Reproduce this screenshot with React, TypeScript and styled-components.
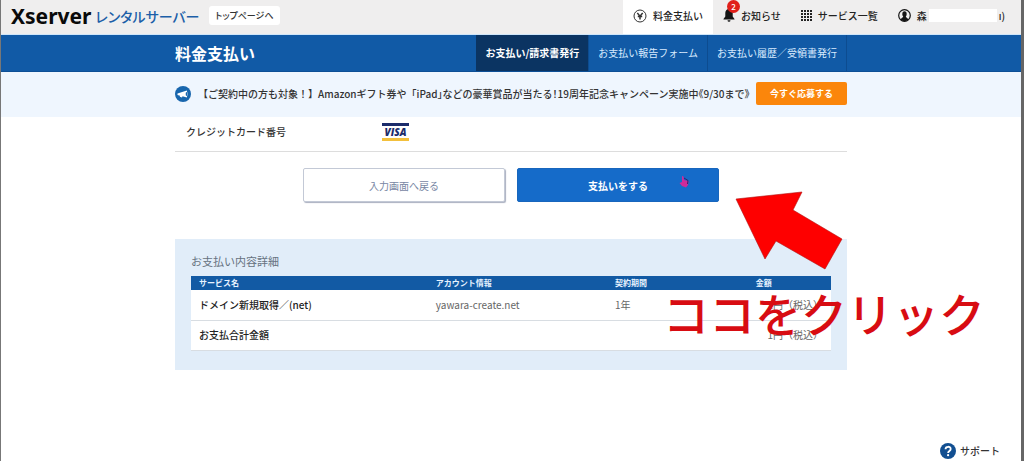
import React from "react";
import styled, { createGlobalStyle, css } from "styled-components";

const GlobalStyle = createGlobalStyle`
  *, *::before, *::after { box-sizing: border-box; }
  body {
    margin: 0;
    background: #fff;
    color: #333;
    font-family: "Noto Sans CJK JP", "Noto Sans", sans-serif;
    font-size: 10px;
    line-height: 16px;
  }
  a { color: inherit; text-decoration: none; }
  button { font-family: inherit; cursor: pointer; }
  svg { flex-shrink: 0; }
`;

const Page = styled.div`
  min-height: 100vh;
  display: flex;
  flex-direction: column;
  border-left: 1px solid #777;
  border-right: 3px solid #666;
`;

const Header = styled.header`
  display: flex;
  align-items: stretch;
  height: 35px;
  padding: 0 16px 0 10px;
  background: #efeeee;
  border-bottom: 1px solid #cfe6fa;
`;

const Brand = styled.a`
  display: flex;
  align-items: center;
  gap: 4px;
  height: 32px;
`;

const BrandName = styled.span`
  font-family: "Noto Sans", sans-serif;
  font-size: 21px;
  font-weight: 700;
  color: #0a0a0a;
`;

const BrandProduct = styled.span`
  font-size: 14px;
  font-weight: 500;
  font-feature-settings: "palt";
  color: #1c5fa8;
`;

const TopLink = styled.a`
  align-self: flex-start;
  margin: 6px 0 0 10px;
  padding: 0 6px;
  border-radius: 3px;
  background: #fff;
  font-size: 9px;
  font-weight: 500;
  line-height: 19px;
  font-feature-settings: "palt";
`;

const Tools = styled.nav`
  display: flex;
  margin-left: auto;
`;

const Tool = styled.a<{ $active?: boolean }>`
  display: flex;
  align-items: center;
  gap: 6px;
  height: 34px;
  padding: 0 10px 3px;
  font-weight: 500;
  color: #222;
  white-space: nowrap;
  background: ${(p) => (p.$active ? "#fff" : "transparent")};
  &:last-child { padding-right: 0; }
`;

const IconBox = styled.span`
  position: relative;
  display: flex;
`;

const Badge = styled.span`
  position: absolute;
  top: -9px;
  left: 4px;
  width: 13px;
  height: 13px;
  border-radius: 50%;
  background: #e01f1a;
  color: #fff;
  font-size: 8px;
  line-height: 13px;
  text-align: center;
`;

const HiddenName = styled.span`
  width: 68px;
  height: 13px;
  margin: 0 -4px;
  background: #fff;
`;

const TitleBar = styled.div`
  background: #115aa6;
  border-bottom: 1px solid #0d4f96;
`;

const Inner = styled.div`
  display: flex;
  align-items: center;
  width: 100%;
  max-width: 672px;
  margin: 0 auto;
`;

const PageTitle = styled.h1`
  margin: 0 auto 0 0;
  font-size: 16px;
  line-height: 20px;
  font-weight: 700;
  color: #fff;
`;

const SubNav = styled.nav`
  display: flex;
`;

const SubLink = styled.a<{ $active?: boolean }>`
  padding: 0 9px;
  line-height: 36px;
  color: #d9ebff;
  white-space: nowrap;
  border-right: 1px solid #0d4c90;
  ${(p) =>
    p.$active &&
    css`
      background: #0b3462;
      color: #fff;
      font-weight: 700;
    `}
`;

const Campaign = styled.aside`
  padding: 10px 0 12px;
  background: #eff6fe;
`;

const CampaignText = styled.p`
  flex: 1;
  min-width: 0;
  margin: 0 0 0 7px;
  font-size: 10px;
  font-weight: 500;
  white-space: nowrap;
`;

const TightText = styled.span`
  font-feature-settings: "halt";
`;

const ApplyButton = styled.button`
  flex-shrink: 0;
  width: 91px;
  height: 23px;
  padding: 0;
  border: 0;
  border-radius: 2px;
  background: #fb860b;
  color: #fff;
  font-size: 9px;
  font-weight: 700;
`;

const Main = styled.main`
  position: relative;
  width: 100%;
  max-width: 672px;
  margin: 0 auto;
`;

const CardRow = styled.dl`
  display: flex;
  align-items: center;
  height: 35px;
  margin: 0;
  padding: 0 11px 4px;
  border-bottom: 1px solid #ddd;
`;

const CardTerm = styled.dt`
  width: 196px;
  font-weight: 500;
`;

const CardBrand = styled.dd`
  display: flex;
  margin: 0;
`;

const VisaMark = styled.span`
  width: 27px;
  height: 18px;
  border-top: 3px solid #1b2c6b;
  border-bottom: 3px solid #f3c03c;
  color: #1b2c6b;
  font-family: "Open Sans", sans-serif;
  font-size: 10px;
  font-style: italic;
  font-weight: 800;
  line-height: 12px;
  text-align: center;
`;

const Actions = styled.div`
  display: flex;
  justify-content: center;
  gap: 12px;
  padding: 16px 0 37px;
`;

const ActionButton = styled.button<{ $primary?: boolean }>`
  width: 202px;
  height: 34px;
  padding: 0;
  border: 1px solid #c3c9d6;
  border-radius: 2px;
  background: #fff;
  box-shadow: 1px 1px 1px #aab0c0;
  color: #7886a3;
  font-size: 10px;
  ${(p) =>
    p.$primary &&
    css`
      border-color: #1866bd;
      background: #156bc9;
      box-shadow: none;
      color: #fff;
      font-weight: 700;
    `}
`;

const Details = styled.section`
  padding: 14px 16px 19px;
  background: #e1edf9;
`;

const DetailsTitle = styled.h2`
  margin: 0 0 7px;
  font-size: 11px;
  font-weight: 400;
  line-height: 16px;
  color: #66727f;
`;

const DetailTable = styled.table`
  width: 100%;
  table-layout: fixed;
  border-collapse: collapse;
  background: #fff;
`;

const HeadCell = styled.th<{ $width: string; $center?: boolean }>`
  width: ${(p) => p.$width};
  padding: 0 8px;
  background: #125aa4;
  color: #e6f2ff;
  font-size: 8px;
  line-height: 14px;
  font-weight: 700;
  text-align: ${(p) => (p.$center ? "center" : "left")};
`;

const Row = styled.tr`
  border-bottom: 1px solid #d8dde2;
`;

const Cell = styled.td<{ $strong?: boolean; $right?: boolean }>`
  height: 30px;
  padding: 0 8px;
  color: ${(p) => (p.$strong ? "#222" : "#666")};
  font-weight: ${(p) => (p.$strong ? 500 : 400)};
  text-align: ${(p) => (p.$right ? "right" : "left")};
`;

const PointerIcon = styled.svg`
  position: absolute;
  top: 59px;
  left: 504px;
`;

const Arrow = styled.svg`
  position: absolute;
  top: 74px;
  left: 560px;
`;

const Callout = styled.strong`
  position: absolute;
  top: 167px;
  left: 488px;
  font-size: 46px;
  line-height: 56px;
  font-weight: 500;
  color: #d80c12;
  white-space: nowrap;
`;

const Support = styled.a`
  display: flex;
  align-items: center;
  gap: 4px;
  margin: auto 21px 2px auto;
  font-weight: 500;
`;

const YenIcon = () => (
  <svg width="14" height="14" viewBox="0 0 14 14" fill="none" stroke="#333">
    <circle cx="7" cy="7" r="6" />
    <path d="M4.3 4 7 7.200l2.700-3.200M7 7v3.500M4.800 7.400h4.400" strokeWidth="1.500" />
  </svg>
);

const BellIcon = () => (
  <svg width="12" height="13" viewBox="0 0 12 13" fill="#151515">
    <path d="M6 0C3.5 0 2.3 1.8 2.3 4v3.5L.5 10v.5h11V10L9.700 7.500V4C9.700 1.800 8.500 0 6 0ZM4.500 11.200h3a1.500 1.500 0 0 1-3 0Z" />
  </svg>
);

const GridIcon = () => (
  <svg width="11" height="11" viewBox="0 0 11 11" fill="#222">
    {[0, 3, 6, 9].map((y) =>
      [0, 3, 6, 9].map((x) => <rect key={`${x}-${y}`} x={x} y={y} width="2" height="2" />)
    )}
  </svg>
);

const UserIcon = () => (
  <svg width="13" height="13" viewBox="0 0 13 13">
    <circle cx="6.500" cy="6.500" r="5.800" fill="none" stroke="#151515" strokeWidth="1.200" />
    <ellipse cx="6.500" cy="5" rx="2.200" ry="2.700" fill="#151515" />
    <path d="M2.500 10.500C3.500 8.500 5.200 9 5.300 7h2.400c.1 2 1.800 1.500 2.800 3.500-2 2.300-6 2.300-8 0Z" fill="#151515" />
  </svg>
);

const MegaphoneIcon = () => (
  <svg width="16" height="16" viewBox="0 0 16 16">
    <circle cx="8" cy="8" r="8" fill="#1866ad" />
    <path d="M2.500 7.500 11.800 4.500Q13.500 8 11.800 11.500L7.500 10.300 7 11.500 4.800 10.800 5 9.700 2.500 9Z" fill="#fff" />
    <ellipse cx="11.500" cy="8" rx="0.800" ry="2" fill="#1866ad" />
  </svg>
);

const HelpIcon = () => (
  <svg width="16" height="16" viewBox="0 0 16 16">
    <circle cx="8" cy="8" r="8" fill="#124f91" />
    <path d="M5.500 6.200C5.500 3 10.700 3 10.700 6c0 2-2.600 1.900-2.600 4" fill="none" stroke="#fff" strokeWidth="1.800" />
    <circle cx="8.100" cy="12.200" r="1.100" fill="#fff" />
  </svg>
);

const columns = [
  { label: "サービス名", width: "37%" },
  { label: "アカウント情報", width: "28%" },
  { label: "契約期間", width: "14%" },
  { label: "金額", width: "21%", center: true },
];

export default function App() {
  return (
    <>
      <GlobalStyle />
      <Page>
        <Header>
          <Brand href="#">
            <BrandName>Xserver</BrandName>
            <BrandProduct>レンタルサーバー</BrandProduct>
          </Brand>
          <TopLink href="#">トップページへ</TopLink>
          <Tools>
            <Tool href="#" $active>
              <YenIcon />
              料金支払い
            </Tool>
            <Tool href="#">
              <IconBox>
                <BellIcon />
                <Badge>2</Badge>
              </IconBox>
              お知らせ
            </Tool>
            <Tool href="#">
              <GridIcon />
              サービス一覧
            </Tool>
            <Tool href="#">
              <UserIcon />
              森
              <HiddenName />
              ı)
            </Tool>
          </Tools>
        </Header>

        <TitleBar>
          <Inner>
            <PageTitle>料金支払い</PageTitle>
            <SubNav>
              <SubLink href="#" $active>お支払い/請求書発行</SubLink>
              <SubLink href="#">お支払い報告フォーム</SubLink>
              <SubLink href="#">お支払い履歴／受領書発行</SubLink>
            </SubNav>
          </Inner>
        </TitleBar>

        <Campaign>
          <Inner>
            <MegaphoneIcon />
            <CampaignText>
              【ご契約中の方も対象！】Amazonギフト券や「iPad
              <TightText>」などの豪華賞品が当たる！19周年記念キャンペーン実施中《9/30まで》</TightText>
            </CampaignText>
            <ApplyButton type="button">今すぐ応募する</ApplyButton>
          </Inner>
        </Campaign>

        <Main>
          <CardRow>
            <CardTerm>クレジットカード番号</CardTerm>
            <CardBrand>
              <VisaMark>VISA</VisaMark>
            </CardBrand>
          </CardRow>

          <Actions>
            <ActionButton type="button">入力画面へ戻る</ActionButton>
            <ActionButton type="button" $primary>支払いをする</ActionButton>
          </Actions>

          <Details>
            <DetailsTitle>お支払い内容詳細</DetailsTitle>
            <DetailTable>
              <thead>
                <tr>
                  {columns.map((c) => (
                    <HeadCell key={c.label} $width={c.width} $center={c.center}>
                      {c.label}
                    </HeadCell>
                  ))}
                </tr>
              </thead>
              <tbody>
                <Row>
                  <Cell $strong>ドメイン新規取得／(net)</Cell>
                  <Cell>yawara-create.net</Cell>
                  <Cell>1年</Cell>
                  <Cell $right>1円（税込）</Cell>
                </Row>
                <Row>
                  <Cell $strong>お支払合計金額</Cell>
                  <Cell />
                  <Cell />
                  <Cell $right>1円（税込）</Cell>
                </Row>
              </tbody>
            </DetailTable>
          </Details>

          <PointerIcon width="10" height="12" viewBox="0 0 10 12">
            <path d="M3 0 4.500.5 5 4 9.500 5 9 9 7 11.500 3 10 .5 7 3 6Z" fill="#cf2a9a" />
            <path d="M5 2 9 4.500 8.500 8" fill="none" stroke="#3a1d6b" />
          </PointerIcon>
          <Arrow width="108" height="80" viewBox="0 0 108 80">
            <path d="M1 8 67 1 58 19 107 48 90 78 41 50 30 68Z" fill="#fe0000" stroke="#b01010" strokeWidth="0.6" />
          </Arrow>
          <Callout>ココをクリック</Callout>
        </Main>

        <Support href="#">
          <HelpIcon />
          サポート
        </Support>
      </Page>
    </>
  );
}
